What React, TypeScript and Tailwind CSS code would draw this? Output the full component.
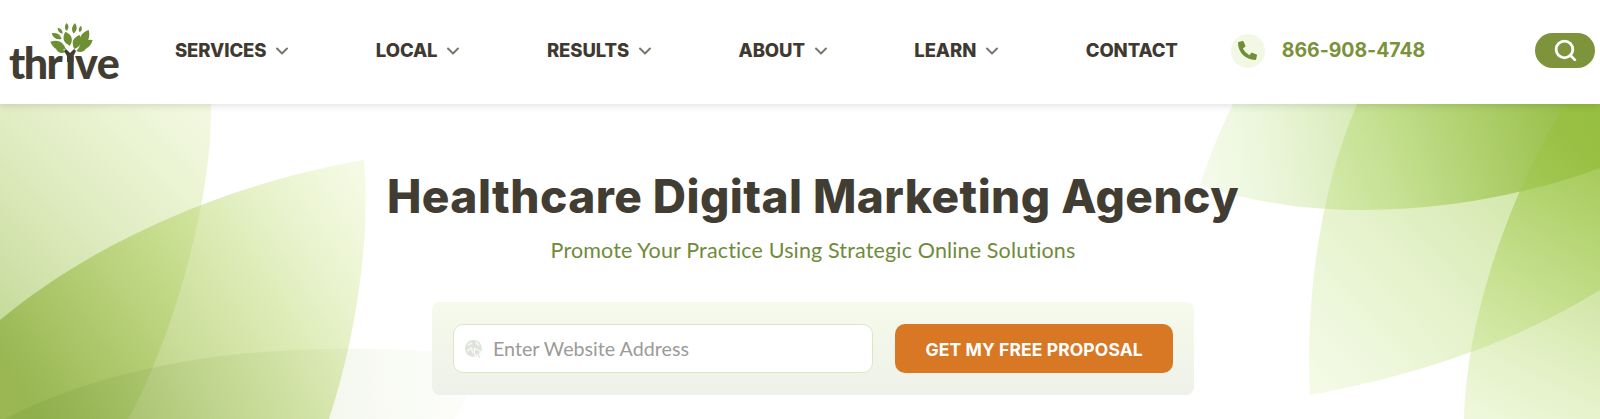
import { ChevronDown, Search } from "lucide-react";
import { FaPhoneAlt } from "react-icons/fa";

const leaves: [number, number, number, number, number][] = [
  [197, 48, 197, 24, 0.46],
  [218, 56, 222, 24, 0.44],
  [236, 52, 240, 32, 0.44],
  [185, 56, 170, 38, 0.44],
  [207, 92, 193, 50, 0.55],
  [220, 102, 236, 60, 0.55],
  [238, 92, 263, 45, 0.46],
  [182, 72, 152, 55, 0.46],
  [195, 102, 148, 80, 0.48],
  [232, 102, 275, 75, 0.46],
  [192, 112, 165, 102, 0.44],
  [226, 108, 256, 100, 0.44],
];

function leafPath([x1, y1, x2, y2, w]: [number, number, number, number, number]) {
  const ax = x1 / 3;
  const ay = y1 / 3 + 15;
  const bx = x2 / 3;
  const by = y2 / 3 + 15;
  const dx = bx - ax;
  const dy = by - ay;
  const nx = -dy * w;
  const ny = dx * w;
  const mx = ax + dx * 0.5;
  const my = ay + dy * 0.5;
  return `M${ax} ${ay} Q${mx + nx} ${my + ny} ${bx} ${by} Q${mx - nx} ${my - ny} ${ax} ${ay}Z`;
}

function Logo() {
  return (
    <div className="relative h-[104px] w-[122px] shrink-0 self-start">
      <span className="absolute left-[8px] top-[35px] flex font-['Lato',sans-serif] text-[43px] font-black leading-[56px] tracking-[-1.5px] text-[#423d33]">
        <span className="w-[56px]">thr</span>
        <span className="w-[10px]">ı</span>
        <span className="tracking-[-0.5px]">ve</span>
      </span>
      <svg className="absolute left-0 top-0" width="122" height="104" viewBox="0 0 122 104">
        {leaves.map((l, i) => (
          <path key={i} d={leafPath(l)} fill="#6f8f35" />
        ))}
        <path d="M65 49 L69 53 L73 49 L75 51 L72.500 56 L72.500 62 L66 62 L66 56 L63 51Z" fill="#423d33" />
      </svg>
    </div>
  );
}

function NavItem({ label, chevron = true }: { label: string; chevron?: boolean }) {
  return (
    <a className="flex items-center gap-[6px] font-['Inter',sans-serif] text-[18.500px] font-extrabold tracking-[-0.1px] text-[#3f3a31]">
      {label}
      {chevron && <ChevronDown className="h-[20px] w-[20px] text-[#77776f]" strokeWidth={2.4} />}
    </a>
  );
}

function Background() {
  return (
    <svg className="absolute inset-0" width="1600" height="315" viewBox="0 104 1600 315" preserveAspectRatio="none">
      <defs>
        <linearGradient id="a" gradientUnits="userSpaceOnUse" x1="211" y1="130" x2="0" y2="340">
          <stop offset="0" stopColor="#d5e89a" stopOpacity="0.32" />
          <stop offset="1" stopColor="#a9c86a" stopOpacity="0.7" />
        </linearGradient>
        <linearGradient id="b" gradientUnits="userSpaceOnUse" x1="364" y1="180" x2="30" y2="400">
          <stop offset="0" stopColor="#d5ea95" stopOpacity="0.25" />
          <stop offset="0.4" stopColor="#b8d66a" stopOpacity="0.52" />
          <stop offset="1" stopColor="#92b148" stopOpacity="0.85" />
        </linearGradient>
        <linearGradient id="c" gradientUnits="userSpaceOnUse" x1="470" y1="370" x2="40" y2="400">
          <stop offset="0" stopColor="#cfe0a8" stopOpacity="0.05" />
          <stop offset="1" stopColor="#7fa040" stopOpacity="0.35" />
        </linearGradient>
        <linearGradient id="d" gradientUnits="userSpaceOnUse" x1="1210" y1="170" x2="1600" y2="110">
          <stop offset="0" stopColor="#c9e99a" stopOpacity="0.22" />
          <stop offset="0.45" stopColor="#a8d060" stopOpacity="0.5" />
          <stop offset="1" stopColor="#769a18" stopOpacity="0.95" />
        </linearGradient>
        <linearGradient id="e" gradientUnits="userSpaceOnUse" x1="1320" y1="380" x2="1600" y2="110">
          <stop offset="0" stopColor="#c8e88a" stopOpacity="0.22" />
          <stop offset="1" stopColor="#a0c850" stopOpacity="0.65" />
        </linearGradient>
        <linearGradient id="f" gradientUnits="userSpaceOnUse" x1="1470" y1="410" x2="1600" y2="150">
          <stop offset="0" stopColor="#c5e585" stopOpacity="0.3" />
          <stop offset="1" stopColor="#98c040" stopOpacity="0.75" />
        </linearGradient>
      </defs>
      <path d="M0 104 L211 104 C213 200 172 340 128 419 L0 419Z" fill="url(#a)" />
      <path d="M364 160 C220 185 90 245 0 320 L0 419 L329 419 C355 340 371 240 364 160Z" fill="url(#b)" />
      <path d="M5 419 C110 365 260 335 480 355 C478 380 466 400 455 419Z" fill="url(#c)" />
      <path d="M1233 104 L1600 104 L1600 168 C1500 205 1340 232 1200 185 C1210 155 1220 130 1233 104Z" fill="url(#d)" />
      <path d="M1357 104 C1320 190 1305 300 1310 395 C1420 375 1520 340 1600 290 L1600 104Z" fill="url(#e)" />
      <path d="M1566 104 C1510 190 1466 320 1464 419 L1600 419 L1600 104Z" fill="url(#f)" />
    </svg>
  );
}

function GlobeCursor() {
  return (
    <svg width="20" height="20" viewBox="0 0 20 20" className="shrink-0">
      <circle cx="9.500" cy="9.500" r="8.500" fill="#dfe3dc" />
      <path d="M4 6 L8 4 M3 12 L7 9 L9 14 M12 3 L15 7" stroke="#f6f7f3" strokeWidth="1.800" fill="none" />
      <path d="M10 9 L18 13 L15 14.500 L17 18.500 L15 19.500 L13 15.500 L11 17Z" fill="#dfe3dc" stroke="#ffffff" strokeWidth="1" />
    </svg>
  );
}

export default function App() {
  return (
    <div className="h-[419px] w-[1600px] overflow-hidden bg-white">
      <header className="relative z-10 flex h-[104px] items-center bg-white pb-[3px] pl-[1px] shadow-[0_1px_8px_rgba(0,0,0,0.14)]">
        <Logo />
        <nav className="ml-[52px] flex items-center gap-[83.500px]">
          <NavItem label="SERVICES" />
          <NavItem label="LOCAL" />
          <NavItem label="RESULTS" />
          <NavItem label="ABOUT" />
          <NavItem label="LEARN" />
          <NavItem label="CONTACT" chevron={false} />
        </nav>
        <div className="ml-[53px] flex h-[34px] w-[34px] items-center justify-center rounded-full bg-[#f2f8e4]">
          <FaPhoneAlt className="h-[19px] w-[19px] text-[#6f8f35]" />
        </div>
        <span className="ml-[17px] font-['Inter',sans-serif] text-[19.500px] font-bold tracking-[-0.05px] text-[#7a933b]">
          866-908-4748
        </span>
        <button className="ml-auto mr-[5px] flex h-[35px] w-[60px] items-center justify-center rounded-full bg-[#7e943c]">
          <Search className="h-[25px] w-[25px] text-white" strokeWidth={2.7} />
        </button>
      </header>
      <main className="relative h-[315px]">
        <Background />
        <div className="relative flex flex-col items-center pl-[26px] pt-[62px]">
          <h1 className="font-['Inter',sans-serif] text-[46px] font-extrabold leading-[60px] tracking-[0.45px] text-[#423d33]">
            Healthcare Digital Marketing Agency
          </h1>
          <p className="mt-[10px] font-['Lato',sans-serif] text-[21.500px] leading-[28px] tracking-[0.15px] text-[#6f8b3a]">
            Promote Your Practice Using Strategic Online Solutions
          </p>
          <div className="mt-[38px] flex h-[93px] w-[762px] items-center gap-[22px] rounded-lg bg-gradient-to-b from-[#f6faeb] to-[#eef1e9] px-[21px]">
            <div className="flex h-[49px] w-[421px] items-center gap-[9px] rounded-[10px] border border-[#dfe5c4] bg-white pl-[10px]">
              <GlobeCursor />
              <span className="font-['Lato',sans-serif] text-[19.700px] text-[#9b9b98]">Enter Website Address</span>
            </div>
            <button className="flex h-[49px] w-[278px] items-center justify-center rounded-[10px] bg-[#d87825] pt-[3px] font-['Inter',sans-serif] text-[17.500px] font-bold tracking-[0.1px] text-white">
              GET MY FREE PROPOSAL
            </button>
          </div>
        </div>
      </main>
    </div>
  );
}
